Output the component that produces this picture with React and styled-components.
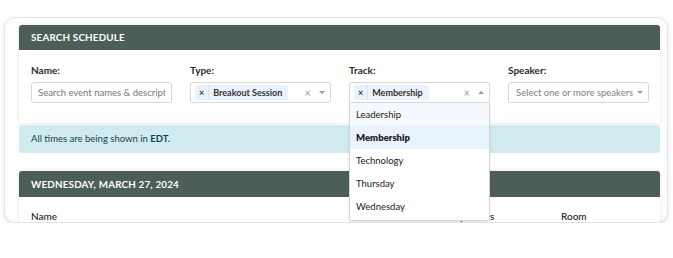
import React from "react";
import styled, { createGlobalStyle } from "styled-components";

const GlobalStyle = createGlobalStyle`
  html, body {
    margin: 0;
    padding: 0;
    background: #ffffff;
  }
  body {
    font-family: "Lato", "Noto Sans", sans-serif;
    color: #222;
  }
`;

const tracks = ["Leadership", "Membership", "Technology", "Thursday", "Wednesday"];

const App = () => {
  return (
    <>
      <GlobalStyle />
      <Frame>
        <Card>
          <CardHeader>Search Schedule</CardHeader>
          <Filters>
            <Field>
              <Label>Name:</Label>
              <TextInput placeholder="Search event names & descriptions" />
            </Field>
            <Field>
              <Label>Type:</Label>
              <Select>
                <Chip>
                  <ChipX>×</ChipX>
                  <ChipText>Breakout Session</ChipText>
                </Chip>
                <Controls>
                  <ClearX>×</ClearX>
                  <Caret />
                </Controls>
              </Select>
            </Field>
            <Field>
              <Label>Track:</Label>
              <SelectWrap>
                <Select open>
                  <Chip>
                    <ChipX>×</ChipX>
                    <ChipText>Membership</ChipText>
                  </Chip>
                  <Controls>
                    <ClearX>×</ClearX>
                    <Caret up />
                  </Controls>
                </Select>
                <Menu>
                  {tracks.map((t, i) => (
                    <Option key={t} hovered={i === 0} selected={t === "Membership"}>
                      {t}
                    </Option>
                  ))}
                </Menu>
              </SelectWrap>
            </Field>
            <Field>
              <Label>Speaker:</Label>
              <Select>
                <Placeholder>Select one or more speakers</Placeholder>
                <Caret />
              </Select>
            </Field>
          </Filters>
        </Card>

        <Alert>
          All times are being shown in <b>EDT.</b>
        </Alert>

        <Card>
          <CardHeader tall>Wednesday, March 27, 2024</CardHeader>
          <TableHead>
            <Th>Name</Th>
            <Th>Speakers</Th>
            <Th>Room</Th>
          </TableHead>
        </Card>
      </Frame>
    </>
  );
};

export default App;

const Frame = styled.div`
  margin: 17px 0 0 4px;
  width: 664px;
  height: 206px;
  box-sizing: border-box;
  border: 1px solid #e2e2e8;
  border-radius: 11px;
  box-shadow: 0 2px 4px rgba(60, 60, 90, 0.12);
  padding: 7px 7px 0 14px;
  overflow: hidden;
  background: #fff;
`;

const Card = styled.div`
  background: #fff;
  border-radius: 3px;
  box-shadow: 0 0 4px rgba(0, 0, 0, 0.12);
  margin-bottom: 18px;
`;

const CardHeader = styled.div`
  background: #4d5e59;
  color: #fff;
  height: ${(p) => (p.tall ? "26px" : "25px")};
  line-height: ${(p) => (p.tall ? "26px" : "25px")};
  padding: 0 12px;
  font-size: 9.8px;
  font-weight: 700;
  letter-spacing: 0.2px;
  text-transform: uppercase;
  border-radius: 3px 3px 0 0;
`;

const Filters = styled.div`
  display: grid;
  grid-template-columns: repeat(4, 141px);
  column-gap: 18px;
  padding: 14px 12px 20px;
`;

const Field = styled.div`
  display: flex;
  flex-direction: column;
`;

const Label = styled.label`
  font-size: 10px;
  font-weight: 700;
  color: #2a2a2a;
  margin-bottom: 6px;
`;

const TextInput = styled.input`
  height: 21px;
  box-sizing: border-box;
  border: 1px solid #d6d6d6;
  border-radius: 3px;
  padding: 0 6px;
  font-family: "Lato", "Noto Sans", sans-serif;
  font-size: 9.5px;
  color: #333;
  outline: none;
  width: 100%;
  &::placeholder {
    color: #777;
  }
`;

const SelectWrap = styled.div`
  position: relative;
`;

const Select = styled.div`
  height: 21px;
  box-sizing: border-box;
  border: 1px solid #d6d6d6;
  border-radius: ${(p) => (p.open ? "3px 3px 0 0" : "3px")};
  padding: 0 5px 0 4px;
  display: flex;
  align-items: center;
  justify-content: space-between;
  background: #fff;
`;

const Chip = styled.div`
  display: flex;
  align-items: center;
  height: 15px;
  background: #e9f3fd;
  border-radius: 2px;
  font-size: 9px;
  color: #333;
`;

const ChipX = styled.span`
  padding: 0 4px 0 4px;
  font-weight: 700;
  font-size: 9px;
  border-right: 1px solid #d4e4f4;
  line-height: 15px;
`;

const ChipText = styled.span`
  padding: 0 6px 0 4px;
  font-weight: 700;
`;

const Controls = styled.div`
  display: flex;
  align-items: center;
  gap: 8px;
`;

const ClearX = styled.span`
  color: #999;
  font-size: 11px;
  line-height: 1;
`;

const Caret = styled.span`
  width: 0;
  height: 0;
  border-left: 3px solid transparent;
  border-right: 3px solid transparent;
  ${(p) =>
    p.up ? "border-bottom: 3px solid #999;" : "border-top: 3px solid #999;"}
`;

const Placeholder = styled.span`
  font-size: 9.5px;
  color: #808080;
  padding-left: 3px;
  white-space: nowrap;
`;

const Menu = styled.div`
  position: absolute;
  top: 21px;
  left: 0;
  right: 0;
  background: #fff;
  border: 1px solid #d6d6d6;
  border-top: none;
  border-radius: 0 0 3px 3px;
  box-shadow: 0 2px 3px rgba(0, 0, 0, 0.1);
  z-index: 10;
`;

const Option = styled.div`
  height: 23px;
  line-height: 23px;
  padding: 0 6px;
  font-size: 9.5px;
  color: #222;
  font-weight: ${(p) => (p.selected ? 800 : 400)};
  background: ${(p) => (p.selected ? "#e9f3fd" : p.hovered ? "#f5f9fd" : "#fff")};
  &:last-child {
    height: 25px;
  }
`;

const Alert = styled.div`
  background: #d1eaef;
  color: #0c4652;
  font-size: 9.5px;
  height: 28px;
  line-height: 28px;
  padding: 0 12px;
  border-radius: 3px;
  margin: -16px 0 18px;
  & b {
    font-weight: 700;
  }
`;

const TableHead = styled.div`
  display: grid;
  grid-template-columns: 424px 106px 1fr;
  padding: 13px 12px;
  font-size: 10px;
  color: #222;
`;

const Th = styled.div`
  font-weight: 500;
`;
